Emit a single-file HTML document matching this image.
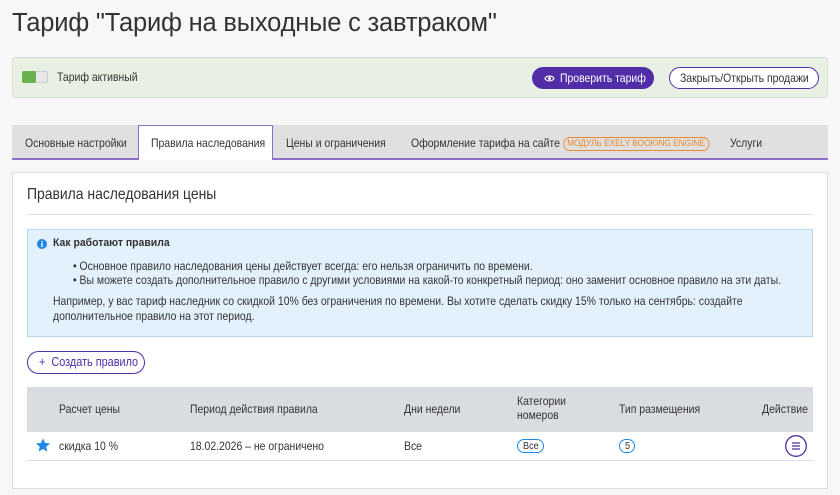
<!DOCTYPE html>
<html><head><meta charset="utf-8"><style>
*{box-sizing:border-box;margin:0;padding:0}
body{width:840px;height:495px;background:#f7f7f7;font-family:"Liberation Sans",sans-serif;color:#333;position:relative;overflow:hidden;font-size:12px}
.a{position:absolute;white-space:nowrap;transform:scaleX(.87);transform-origin:0 0}
h1{position:absolute;left:12px;top:9px;font-weight:400;font-size:25.5px;color:#333;letter-spacing:-0.2px;white-space:nowrap}
.green{position:absolute;left:12px;top:57px;width:816px;height:41px;background:#e7f0e2;border:1px solid #d6e0d2;border-radius:4px}
.tog{position:absolute;left:22px;top:71px;width:26px;height:12px;background:#e8e8e8;border:1px solid #ccc;border-radius:2px}
.tog:before{content:"";position:absolute;left:-1px;top:-1px;width:14px;height:12px;background:#6ab04c;border-radius:2px}
.btn1{position:absolute;left:532px;top:67px;width:122px;height:22px;background:#512da8;border-radius:11px}
.btn2{position:absolute;left:669px;top:67px;width:150px;height:22px;border:1px solid #512da8;border-radius:11px;background:#fff}
.tabs{position:absolute;left:12px;top:125px;width:816px;height:35px;background:#e0e0e0;border-bottom:2px solid #8c6fc9}
.act{position:absolute;top:125px;background:#fff;border:1px solid #8c6fc9;border-bottom:none;height:35px;left:138px;width:135px}
.badge{display:inline-block;border:1px solid #e98a2e;color:#e98a2e;border-radius:8px;font-size:9.5px;line-height:12px;padding:0 4px;vertical-align:1px}
.card{position:absolute;left:12px;top:172px;width:816px;height:317px;background:#fff;border:1px solid #ddd}
.info{position:absolute;left:27px;top:229px;width:786px;height:108px;background:#e3f1fc;border:1px solid #b5d8f2}
.create{position:absolute;left:27px;top:351px;width:118px;height:23px;border:1px solid #512da8;border-radius:12px}
.th{position:absolute;left:27px;top:387px;width:786px;height:45px;background:#d9dce1}
.tr{position:absolute;left:27px;top:432px;width:786px;height:29px;background:#fff;border-bottom:1px solid #d6dbe6}
.pill{position:absolute;border:1px solid #1e88e5;border-radius:7px;height:14px}
</style></head><body>
<h1>Тариф "Тариф на выходные с завтраком"</h1>
<div class="green"></div><div class="tog"></div>
<div class="a" style="left:57px;top:70px">Тариф активный</div>
<div class="btn1"></div>
<svg style="position:absolute;left:544px;top:73px" width="11" height="11" viewBox="0 0 12 12"><path d="M1 6C3 2.5 9 2.5 11 6C9 9.5 3 9.5 1 6Z" fill="none" stroke="#fff" stroke-width="1.3"/><circle cx="6" cy="6" r="1.6" fill="#fff"/></svg>
<div class="a" style="left:560px;top:71px;color:#fff">Проверить тариф</div>
<div class="btn2"></div>
<div class="a" style="left:680px;top:71px">Закрыть/Открыть продажи</div>
<div class="tabs"></div><div class="act"></div>
<div class="a" style="left:25px;top:136px">Основные настройки</div>
<div class="a" style="left:151px;top:136px">Правила наследования</div>
<div class="a" style="left:286px;top:136px">Цены и ограничения</div>
<div class="a" style="left:411px;top:136px">Оформление тарифа на сайте <span class="badge">МОДУЛЬ EXELY BOOKING ENGINE</span></div>
<div class="a" style="left:730px;top:136px">Услуги</div>
<div class="card"></div>
<div class="a" style="left:27px;top:186px;font-size:16px">Правила наследования цены</div>
<div style="position:absolute;left:27px;top:214px;width:786px;height:1px;background:#ddd"></div>
<div class="info"></div>
<svg style="position:absolute;left:37px;top:239px" width="10" height="10"><circle cx="5" cy="5" r="5" fill="#1e88e5"/><rect x="4.3" y="4" width="1.4" height="4" fill="#fff"/><rect x="4.3" y="2" width="1.4" height="1.3" fill="#fff"/></svg>
<div class="a" style="left:53px;top:237px;font-size:11px;font-weight:bold;transform:scaleX(.95)">Как работают правила</div>
<div class="a" style="left:73px;top:259px">• Основное правило наследования цены действует всегда: его нельзя ограничить по времени.</div>
<div class="a" style="left:73px;top:273px">• Вы можете создать дополнительное правило с другими условиями на какой-то конкретный период: оно заменит основное правило на эти даты.</div>
<div class="a" style="left:53px;top:294px;line-height:15px">Например, у вас тариф наследник со скидкой 10% без ограничения по времени. Вы хотите сделать скидку 15% только на сентябрь: создайте<br>дополнительное правило на этот период.</div>
<div class="create"></div>
<div class="a" style="left:39px;top:355px;color:#512da8;font-size:12.5px">+&nbsp; Создать правило</div>
<div class="th"></div>
<div class="a" style="left:59px;top:402px">Расчет цены</div>
<div class="a" style="left:190px;top:402px">Период действия правила</div>
<div class="a" style="left:404px;top:402px">Дни недели</div>
<div class="a" style="left:517px;top:394px;line-height:14px">Категории<br>номеров</div>
<div class="a" style="left:619px;top:402px">Тип размещения</div>
<div class="a" style="left:762px;top:402px">Действие</div>
<div class="tr"></div>
<svg style="position:absolute;left:35px;top:437px" width="16" height="16" viewBox="0 0 24 24"><path d="M12 2l3 7 7.5.6-5.7 5 1.8 7.4L12 18l-6.6 4 1.8-7.4-5.7-5L9 9z" fill="#1e88e5"/></svg>
<div class="a" style="left:59px;top:439px">скидка 10 %</div>
<div class="a" style="left:190px;top:439px">18.02.2026 – не ограничено</div>
<div class="a" style="left:404px;top:439px">Все</div>
<div class="pill" style="left:517px;top:439px;width:27px"></div>
<div class="a" style="left:523px;top:440px;font-size:10.5px">Все</div>
<div class="pill" style="left:619px;top:439px;width:16px"></div>
<div class="a" style="left:625px;top:440px;font-size:10.5px">5</div>
<svg style="position:absolute;left:785px;top:435px" width="22" height="22"><circle cx="11" cy="11" r="10.3" fill="#fff" stroke="#512da8" stroke-width="1.3"/><path d="M7 8h8M7 11h8M7 14h8" stroke="#512da8" stroke-width="1.3"/></svg>
</body></html>
